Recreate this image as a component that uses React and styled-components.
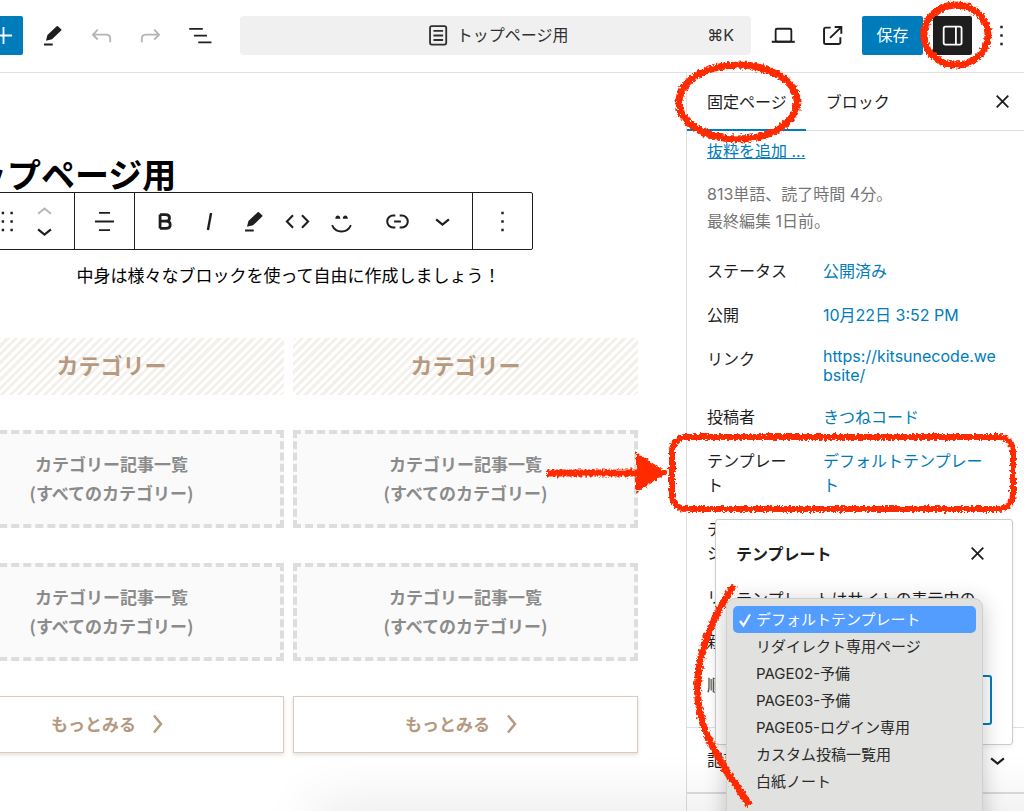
import React, { useState } from 'react';
import styled, { createGlobalStyle, css } from 'styled-components';

const GlobalStyle = createGlobalStyle`
  *, *::before, *::after { box-sizing: border-box; }
  body { margin: 0; background: #fff; }
  h1, h2, p, ul, dl, dd { margin: 0; padding: 0; }
  button, select, input { font: inherit; }
  svg { flex: none; }
`;

const BLUE = '#007cba';
const INK = '#1e1e1e';
const RED = '#ff2a00';

const Page = styled.div`
  position: relative;
  display: flex;
  flex-direction: column;
  height: 100vh;
  overflow: hidden;
  background: #fff;
  color: ${INK};
  font-family: Inter, "Noto Sans CJK JP", sans-serif;
  font-size: 16px;
  line-height: 24px;

  /* soft shadow rising from the bottom edge */
  &::before {
    content: "";
    position: absolute;
    right: -40px;
    bottom: -22px;
    left: 320px;
    height: 20px;
    box-shadow: 0 0 56px 6px rgba(0, 0, 0, 0.12);
    pointer-events: none;
  }
`;

const Header = styled.header`
  display: flex;
  align-items: center;
  gap: 10px;
  flex: none;
  height: 73px;
  padding: 0 3px 2px 0;
  border-bottom: 1px solid #e0e0e0;
`;

const IconButton = styled.button`
  display: flex;
  align-items: center;
  justify-content: center;
  flex: none;
  width: ${({ $width }) => $width || 39}px;
  height: 39px;
  padding: 0;
  border: 0;
  border-radius: 2px;
  background: none;
  color: ${({ $dim }) => ($dim ? '#b4b4b4' : INK)};
  ${({ $tone }) => $tone && css`
    background: ${$tone};
    color: #fff;
  `}
`;

const InsertButton = styled(IconButton)`
  margin-left: -16px;
`;

const SaveButton = styled(IconButton)`
  width: 61px;
`;

const CommandBar = styled.button`
  display: flex;
  align-items: center;
  flex: 1;
  min-width: 0;
  height: 39px;
  margin: 0 3px 0 11px;
  padding: 0 17px;
  border: 0;
  border-radius: 4px;
  background: #f0f0f0;
  color: #2f2f2f;
`;

const CommandTitle = styled.span`
  display: flex;
  align-items: center;
  justify-content: center;
  gap: 4px;
  flex: 1;
  padding-left: 28px;
`;

const Main = styled.div`
  display: flex;
  flex: 1;
  min-height: 0;
`;

const Canvas = styled.main`
  display: flex;
  justify-content: flex-end;
  flex: 1;
  min-width: 0;
  overflow: hidden;
  padding-right: 48px;
  font-family: "Noto Sans CJK JP", sans-serif;
  font-size: 17px;
`;

const Content = styled.article`
  flex: none;
  width: 699px;
  padding-top: 83px;
`;

const PageTitle = styled.h1`
  color: #000;
  font-size: 34px;
  line-height: 36px;
`;

const BlockToolbar = styled.div`
  display: flex;
  width: fit-content;
  height: 58px;
  border: 1px solid ${INK};
  border-radius: 2px;
  background: #fff;
`;

const ToolGroup = styled.div`
  display: flex;
  align-items: center;
  justify-content: ${({ $end }) => ($end ? 'flex-end' : 'flex-start')};
  min-width: ${({ $min }) => $min || 60}px;
  padding: 0 8px;

  & + & {
    border-left: 1px solid ${INK};
  }
`;

const MoverStack = styled.div`
  display: flex;
  flex-direction: column;
`;

const Mover = styled(IconButton)`
  width: 44px;
  height: 20px;
`;

const Lead = styled.p`
  margin: 11px 0 49px;
  color: #000;
  line-height: 28px;
  text-align: center;
`;

const Columns = styled.div`
  display: grid;
  grid-template-columns: 1fr 1fr;
  gap: 35px 9px;
`;

const StripedHeading = styled.h2`
  height: 57px;
  border-radius: 4px;
  background: repeating-linear-gradient(-45deg, #f4f0eb 0 3px, #fff 3px 6px);
  color: #b59a80;
  font-size: 22px;
  line-height: 52px;
  text-align: center;
`;

const Placeholder = styled.div`
  display: flex;
  flex-direction: column;
  justify-content: center;
  height: 98px;
  padding-bottom: 3px;
  border: 4px dashed #ddd;
  background: #fafafa;
  color: #8b8b8b;
  font-weight: 700;
  line-height: 29px;
  text-align: center;
`;

const MoreLink = styled.a`
  display: flex;
  align-items: center;
  justify-content: center;
  gap: 10px;
  height: 57px;
  padding: 0 4px 2px 0;
  border: 1px solid #dccabd;
  box-shadow: 0 2px 4px rgba(0, 0, 0, 0.12);
  color: #b59a80;
  font-weight: 700;
  text-decoration: none;
`;

const Sidebar = styled.aside`
  flex: none;
  width: 338px;
  border-left: 1px solid #ddd;
`;

const Tabs = styled.div`
  display: flex;
  align-items: center;
  height: 58px;
  padding-right: 2px;
  border-bottom: 1px solid #ddd;
`;

const Tab = styled.button`
  height: 58px;
  padding: 0 19px 0 20px;
  border: 0;
  background: none;
  box-shadow: ${({ $active }) => ($active ? `inset 0 -2px 0 ${BLUE}` : 'none')};
  color: ${INK};
`;

const TabClose = styled(IconButton)`
  margin-left: auto;
`;

const Summary = styled.section`
  padding: 8px 20px 22px;
  border-bottom: 1px solid #e0e0e0;
`;

const ExcerptLink = styled.a`
  color: ${BLUE};
`;

const Meta = styled.p`
  margin: 18px 0 16px;
  color: #757575;
  line-height: 27px;
`;

const Fields = styled.dl`
  display: flex;
  flex-direction: column;
  gap: 4px;
`;

const Field = styled.div`
  display: flex;
  padding: 8px 0;
`;

const FieldLabel = styled.dt`
  width: 116px;
  padding-right: 28px;
  word-break: break-all;
`;

const FieldValue = styled.dd`
  width: 173px;
  color: ${BLUE};
  line-height: ${({ $tight }) => ($tight ? 19 : 24)}px;
  word-break: break-all;
`;

const ValueLink = styled.a`
  color: inherit;
  text-decoration: none;
`;

const PanelToggle = styled.button`
  display: flex;
  align-items: center;
  justify-content: space-between;
  width: 100%;
  height: 66px;
  padding: 0 12px 0 20px;
  border: 0;
  border-bottom: 2px solid #ddd;
  background: none;
  color: ${INK};
`;

const Popover = styled.div`
  position: absolute;
  top: 519px;
  right: 11px;
  width: 298px;
  padding: 14px 20px 19px;
  border: 1px solid #ccc;
  border-radius: 3px;
  background: #fff;
  box-shadow: 0 2px 5px rgba(0, 0, 0, 0.06);
`;

const PopoverHead = styled.div`
  display: flex;
  align-items: center;
  justify-content: space-between;
  margin: 0 -5px 13px 0;
`;

const PopoverTitle = styled.h2`
  font-size: 16px;
`;

const PopoverText = styled.p`
  padding-right: 8px;
  line-height: 27px;
`;

const TemplateSelect = styled.select`
  display: block;
  appearance: none;
  width: 100%;
  height: 50px;
  margin-top: 8px;
  padding: 0 12px;
  border: 2px solid ${BLUE};
  border-radius: 3px;
  background: #fff;
`;

const Menu = styled.ul`
  position: absolute;
  top: 598px;
  right: 41px;
  width: 257px;
  height: 260px;
  padding: 7px 6px;
  border: 1px solid #cfcfcd;
  border-radius: 9px;
  background: #e1e1df;
  box-shadow: 0 4px 22px rgba(0, 0, 0, 0.22);
  color: #2a2a2a;
  font-size: 15px;
  line-height: 27px;
  list-style: none;
`;

const MenuItem = styled.li`
  display: flex;
  align-items: center;
  gap: 4px;
  height: 27px;
  padding-left: ${({ $selected }) => ($selected ? 5 : 23)}px;
  border-radius: 5px;
  background: ${({ $selected }) => ($selected ? '#529dff' : 'none')};
  color: ${({ $selected }) => ($selected ? '#fff' : 'inherit')};
`;

const Marks = styled.svg`
  position: absolute;
  top: 0;
  right: 0;
  pointer-events: none;
`;

const Icon = ({ children }) => (
  <svg width="29" height="29" viewBox="0 0 24 24" fill="currentColor" aria-hidden="true">
    {children}
  </svg>
);

const stroked = { fill: 'none', stroke: 'currentColor', strokeWidth: 1.5 };

const MarkerIcon = () => (
  <Icon>
    <path d="M15.500 4.300q.5-.5 1 0l2.700 2.600q.5.500 0 1L11.600 15.200l-5 1.200L7.800 11.500ZM5 18.700h7.200v1.500H5z" />
  </Icon>
);

const CloseIcon = () => (
  <Icon>
    <path d="m7.200 7.200 9.600 9.600M16.800 7.200 7.200 16.800" {...stroked} />
  </Icon>
);

const ChevronDown = () => (
  <Icon>
    <path d="m6.700 10.200 5.300 4.300 5.300-4.300" {...stroked} strokeWidth={1.800} />
  </Icon>
);

const DotsIcon = () => (
  <Icon>
    <path d="M11 4h2v2h-2zM11 11h2v2h-2zM11 18h2v2h-2z" />
  </Icon>
);

const options = [
  'デフォルトテンプレート',
  'リダイレクト専用ページ',
  'PAGE02-予備',
  'PAGE03-予備',
  'PAGE05-ログイン専用',
  'カスタム投稿一覧用',
  '白紙ノート',
];

const fields = [
  { label: 'ステータス', value: '公開済み' },
  { label: '公開', value: '10月22日 3:52 PM' },
  { label: 'リンク', value: 'https://kitsunecode.website/', href: '#link' },
  { label: '投稿者', value: 'きつねコード' },
  { label: 'テンプレート', value: 'デフォルトテンプレート' },
  { label: 'ディスカッション', value: '' },
  { label: 'リビジョン', value: '' },
  { label: '親', value: '' },
  { label: '順序', value: '' },
];

function EditorHeader() {
  return (
    <Header>
      <InsertButton type="button" $tone={BLUE} aria-label="ブロックを追加">
        <Icon><path d="M12 5v14M5 12h14" {...stroked} /></Icon>
      </InsertButton>
      <IconButton type="button" aria-label="ツール"><MarkerIcon /></IconButton>
      <IconButton type="button" $dim aria-label="元に戻す">
        <Icon>
          <path d="M8.900 7.200 4.900 11.300l4 4M5 11.300h10.800c2.100 0 3.400 1.200 3.400 3.200v3" {...stroked} />
        </Icon>
      </IconButton>
      <IconButton type="button" $dim aria-label="やり直し">
        <Icon>
          <path d="m15.100 7.200 4 4.100-4 4M19 11.300H8.200c-2.100 0-3.400 1.200-3.400 3.200v3" {...stroked} />
        </Icon>
      </IconButton>
      <IconButton type="button" aria-label="ドキュメント概観">
        <Icon><path d="M3.500 6.500h11.200M7.400 12.100h10.800M11 17.700h10.900" {...stroked} /></Icon>
      </IconButton>
      <CommandBar type="button">
        <CommandTitle>
          <Icon>
            <rect x="5" y="4.300" width="13.400" height="15.200" rx="1.500" {...stroked} />
            <path d="M7.800 8.200h8M7.800 12h8M7.800 15.700h8" {...stroked} />
          </Icon>
          トップページ用
        </CommandTitle>
        <span>⌘K</span>
      </CommandBar>
      <IconButton type="button" aria-label="表示">
        <Icon>
          <rect x="5.500" y="6.400" width="13" height="10.600" rx="1.200" {...stroked} />
          <path d="M2.300 17.200h19" {...stroked} strokeWidth={1.700} />
        </Icon>
      </IconButton>
      <IconButton type="button" aria-label="ページを表示">
        <Icon>
          <path d="M10.500 5.500H6.500c-.8 0-1.500.7-1.500 1.500v10.500c0 .8.7 1.500 1.500 1.500H17c.8 0 1.500-.7 1.500-1.500v-4M13.800 5h5.500v5.500M19.200 5.100 10 14" {...stroked} strokeWidth={1.600} />
        </Icon>
      </IconButton>
      <SaveButton type="button" $tone={BLUE}>保存</SaveButton>
      <IconButton type="button" $tone={INK} aria-label="設定">
        <Icon>
          <rect x="4.700" y="4.700" width="14.800" height="14.800" rx="1.500" {...stroked} />
          <path d="M14.800 4.500v15" {...stroked} />
        </Icon>
      </IconButton>
      <IconButton type="button" aria-label="オプション"><DotsIcon /></IconButton>
    </Header>
  );
}

function Toolbar() {
  return (
    <BlockToolbar role="toolbar" aria-label="ブロックツール">
      <ToolGroup $min={134} $end>
        <IconButton type="button" $width={30} aria-label="ドラッグ">
          <Icon>
            <path d="M7.200 4h2v2h-2zM14.400 4h2v2h-2zM7.200 11h2v2h-2zM14.400 11h2v2h-2zM7.200 18h2v2h-2zM14.400 18h2v2h-2z" />
          </Icon>
        </IconButton>
        <MoverStack>
          <Mover type="button" $dim aria-label="上に移動">
            <Icon><path d="m6.700 13.800 5.300-4.300 5.300 4.300" {...stroked} /></Icon>
          </Mover>
          <Mover type="button" aria-label="下に移動"><ChevronDown /></Mover>
        </MoverStack>
      </ToolGroup>
      <ToolGroup>
        <IconButton type="button" $width={43} aria-label="配置">
          <Icon><path d="M7.400 4.800h9.200M4.100 12h15.800M7.400 19.200h9.200" {...stroked} /></Icon>
        </IconButton>
      </ToolGroup>
      <ToolGroup $min={338}>
        <IconButton type="button" $width={44} aria-label="太字">
          <Icon>
            <path d="M7.500 6.300v11.400M7.500 6.300h4.500c2.100 0 3.300 1 3.300 2.700s-1.200 2.700-3.300 2.700H7.500M12.300 11.700c2.300 0 3.600 1.100 3.600 3s-1.300 3-3.600 3H7.500" {...stroked} strokeWidth={2.300} />
          </Icon>
        </IconButton>
        <IconButton type="button" $width={44} aria-label="イタリック">
          <Icon><path d="m13.300 5-2.600 14" {...stroked} strokeWidth={2} /></Icon>
        </IconButton>
        <IconButton type="button" $width={44} aria-label="マーカー"><MarkerIcon /></IconButton>
        <IconButton type="button" $width={44} aria-label="コード">
          <Icon><path d="M8.300 6.800 3.200 12l5.100 5.200M15.700 6.800l5.100 5.200-5.100 5.200" {...stroked} strokeWidth={1.700} /></Icon>
        </IconButton>
        <IconButton type="button" $width={44} aria-label="アイコン">
          <Icon>
            <path d="M4.200 15c2.900 7 12.700 7 15.600 0" {...stroked} />
            <path d="M6.900 9.700c0-3.500 4.100-3.500 4.100 0zM13.100 9.700c0-3.500 4.100-3.500 4.100 0z" />
          </Icon>
        </IconButton>
        <IconButton type="button" $width={68} aria-label="リンク">
          <Icon>
            <path d="M10.200 7.100H8.400a4.900 4.900 0 0 0 0 9.800h1.800M13.800 7.100h1.800a4.900 4.900 0 0 1 0 9.800h-1.800M9.200 12h5.600" {...stroked} strokeWidth={1.700} />
          </Icon>
        </IconButton>
        <IconButton type="button" $width={22} aria-label="さらに表示"><ChevronDown /></IconButton>
      </ToolGroup>
      <ToolGroup>
        <IconButton type="button" $width={43} aria-label="オプション"><DotsIcon /></IconButton>
      </ToolGroup>
    </BlockToolbar>
  );
}

function CategoryList() {
  return (
    <Placeholder>
      <span>カテゴリー記事一覧</span>
      <span>(すべてのカテゴリー)</span>
    </Placeholder>
  );
}

function More() {
  return (
    <MoreLink href="#more">
      もっとみる
      <svg width="22" height="22" viewBox="0 0 22 22" aria-hidden="true">
        <path d="m8 2.500 7 8.500-7 8.500" fill="none" stroke="currentColor" strokeWidth="2.500" />
      </svg>
    </MoreLink>
  );
}

// Hand-drawn red marker strokes laid over the editor
function Annotations() {
  return (
    <Marks width="1024" height="811" viewBox="0 0 1024 811" aria-hidden="true">
      <defs>
        <filter id="crayon" x="0" y="0" width="1024" height="811" filterUnits="userSpaceOnUse">
          <feTurbulence type="fractalNoise" baseFrequency="0.4" numOctaves="2" seed="4" result="noise" />
          <feDisplacementMap in="SourceGraphic" in2="noise" scale="6" xChannelSelector="R" yChannelSelector="G" />
        </filter>
      </defs>
      <g filter="url(#crayon)" fill="none" stroke={RED} strokeWidth="7">
        <ellipse cx="956" cy="35" rx="32" ry="30" />
        <ellipse cx="738" cy="102" rx="59" ry="37" />
        <rect x="672" y="437" width="341" height="72" rx="14" strokeWidth="6" />
        <path d="M547 473h92" />
        <path d="m637 454 29 19-29 18z" fill={RED} strokeWidth="2" />
        <path d="M734 585C690 650 690 705 712 745 722 768 737 785 749 805" />
      </g>
    </Marks>
  );
}

export default function App() {
  const [template, setTemplate] = useState(options[0]);

  return (
    <Page>
      <GlobalStyle />
      <EditorHeader />
      <Main>
        <Canvas>
          <Content>
            <PageTitle>トップページ用</PageTitle>
            <Toolbar />
            <Lead>中身は様々なブロックを使って自由に作成しましょう！</Lead>
            <Columns>
              <StripedHeading>カテゴリー</StripedHeading>
              <StripedHeading>カテゴリー</StripedHeading>
              <CategoryList />
              <CategoryList />
              <CategoryList />
              <CategoryList />
              <More />
              <More />
            </Columns>
          </Content>
        </Canvas>
        <Sidebar>
          <Tabs>
            <Tab type="button" $active>固定ページ</Tab>
            <Tab type="button">ブロック</Tab>
            <TabClose type="button" aria-label="設定を閉じる"><CloseIcon /></TabClose>
          </Tabs>
          <Summary>
            <ExcerptLink href="#excerpt">抜粋を追加 ...</ExcerptLink>
            <Meta>
              813単語、読了時間 4分。
              <br />
              最終編集 1日前。
            </Meta>
            <Fields>
              {fields.map((field) => (
                <Field key={field.label}>
                  <FieldLabel>{field.label}</FieldLabel>
                  <FieldValue $tight={Boolean(field.href)}>
                    {field.value && <ValueLink href={field.href || '#edit'}>{field.value}</ValueLink>}
                  </FieldValue>
                </Field>
              ))}
            </Fields>
          </Summary>
          <PanelToggle type="button">
            記事設定
            <ChevronDown />
          </PanelToggle>
        </Sidebar>
      </Main>
      <Popover role="dialog" aria-label="テンプレート">
        <PopoverHead>
          <PopoverTitle>テンプレート</PopoverTitle>
          <IconButton type="button" aria-label="閉じる"><CloseIcon /></IconButton>
        </PopoverHead>
        <PopoverText>テンプレートはサイトの表示中のコンテンツの表示方法を定義します。</PopoverText>
        <TemplateSelect
          aria-label="テンプレート"
          value={template}
          onChange={(e) => setTemplate(e.target.value)}
        >
          {options.map((option) => <option key={option}>{option}</option>)}
        </TemplateSelect>
      </Popover>
      <Menu role="listbox" aria-label="テンプレート">
        {options.map((option) => (
          <MenuItem
            key={option}
            role="option"
            aria-selected={option === template}
            $selected={option === template}
            onClick={() => setTemplate(option)}
          >
            {option === template && (
              <svg width="14" height="16" viewBox="0 0 14 16" aria-hidden="true">
                <path d="m2 9 3.500 4.500L12 2.500" fill="none" stroke="currentColor" strokeWidth="2.200" />
              </svg>
            )}
            {option}
          </MenuItem>
        ))}
      </Menu>
      <Annotations />
    </Page>
  );
}
